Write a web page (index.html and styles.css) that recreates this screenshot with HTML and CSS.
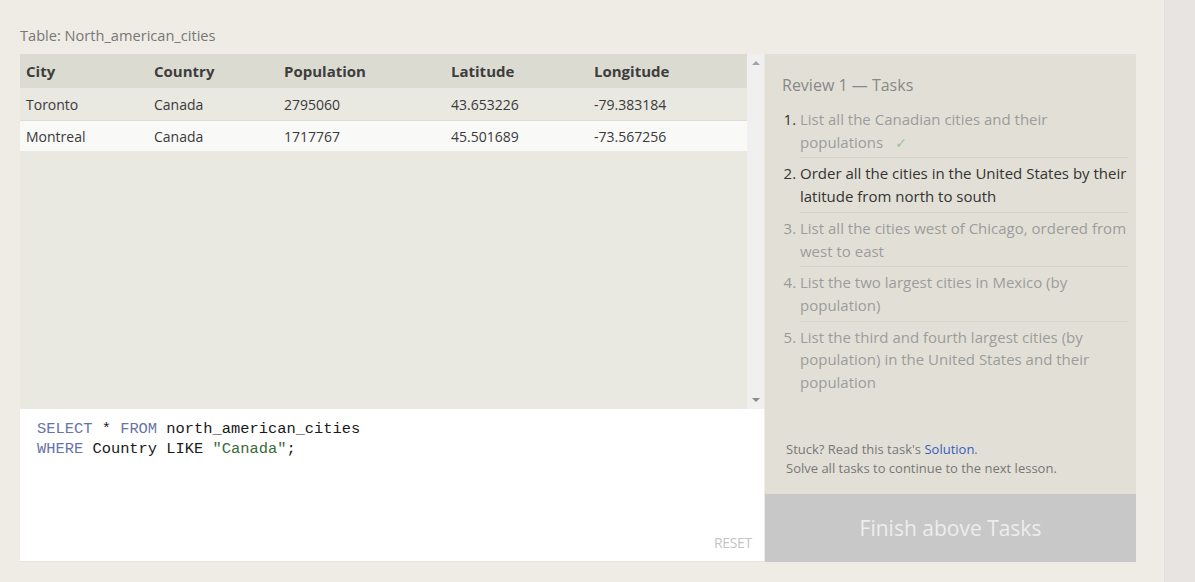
FILE: index.html
```html
<!DOCTYPE html>
<html>
<head>
<meta charset="utf-8">
<link rel="stylesheet" href="styles.css">
</head>
<body>
<div class="page">
  <div class="main">
    <div class="caption">Table: North_american_cities</div>
    <div class="workspace">
      <div class="left">
        <div class="results">
          <div class="table-wrap">
            <table class="data">
              <thead>
                <tr><th class="c1">City</th><th class="c2">Country</th><th class="c3">Population</th><th class="c4">Latitude</th><th class="c5">Longitude</th></tr>
              </thead>
              <tbody>
                <tr class="odd"><td>Toronto</td><td>Canada</td><td>2795060</td><td>43.653226</td><td>-79.383184</td></tr>
                <tr class="even"><td>Montreal</td><td>Canada</td><td>1717767</td><td>45.501689</td><td>-73.567256</td></tr>
              </tbody>
            </table>
          </div>
          <div class="scrollbar">
            <span class="arrow up"></span>
            <span class="arrow down"></span>
          </div>
        </div>
        <div class="editor">
          <pre class="code"><span class="kw">SELECT</span> * <span class="kw">FROM</span> north_american_cities
<span class="kw">WHERE</span> Country LIKE <span class="str">"Canada"</span>;</pre>
          <div class="reset">RESET</div>
        </div>
      </div>
      <div class="right">
        <div class="tasks">
          <div class="tasks-title">Review 1 — Tasks</div>
          <ol class="task-list">
            <li class="done"><span class="line">List all the Canadian cities and their</span> <span class="line">populations</span><span class="check">✓</span></li>
            <li class="active">Order all the cities in the United States by their latitude from north to south</li>
            <li class="todo">List all the cities west of Chicago, ordered from west to east</li>
            <li class="todo">List the two largest cities in Mexico (by population)</li>
            <li class="todo last">List the third and fourth largest cities (by population) in the United States and their population</li>
          </ol>
          <div class="help">
            <div>Stuck? Read this task's <a class="link">Solution</a>.</div>
            <div>Solve all tasks to continue to the next lesson.</div>
          </div>
        </div>
        <div class="finish">Finish above Tasks</div>
      </div>
    </div>
  </div>
  <div class="strip"></div>
</div>
</body>
</html>
```

FILE: styles.css
```css
* { box-sizing: border-box; }
html, body { margin: 0; padding: 0; }
body {
  background: #efece5;
  font-family: "Open Sans", "Noto Sans", sans-serif;
  color: #333;
}
.page {
  display: flex;
  width: 1195px;
  height: 582px;
  overflow: hidden;
}
.main {
  width: 1164px;
  padding: 24px 0 0 20px;
}
.strip {
  flex: 1;
  background: #e7e4e1;
  border-left: 1px solid #e2dfdc;
}
.caption {
  font-size: 14.6px;
  color: #777;
  height: 30px;
  line-height: 22px;
}
.workspace {
  display: flex;
}
.left {
  width: 745px;
  display: flex;
  flex-direction: column;
}
.results {
  display: flex;
  height: 355px;
  background: #e9e8e1;
}
.table-wrap {
  width: 727px;
}
.scrollbar {
  width: 17px;
  background: #f0f0f0;
  position: relative;
}
.arrow {
  position: absolute;
  left: 5px;
  width: 0;
  height: 0;
  border-left: 4px solid transparent;
  border-right: 4px solid transparent;
}
.arrow.up { top: 7px; border-bottom: 4px solid #a3a3a3; }
.arrow.down { bottom: 7px; border-top: 4px solid #8a8a8a; }
.data {
  width: 100%;
  border-collapse: collapse;
  font-size: 14px;
}
.data th {
  background: #dcdbd1;
  text-align: left;
  font-weight: 700;
  font-size: 15px;
  color: #3d3d3d;
  height: 34px;
  padding: 0 6px;
}
.data td {
  height: 32px;
  padding: 1px 6px 0;
  color: #3a3a3a;
}
.c1 { width: 128px; }
.c2 { width: 130px; }
.c3 { width: 167px; }
.c4 { width: 143px; }
.data tr.odd td { background: #e9e8e1; border-bottom: 1px solid #dedcd5; }
.data tr.even td { background: #f9f9f8; height: 31px; }
.editor {
  height: 153px;
  background: #fff;
  position: relative;
  width: 744px;
  border-bottom: 1px solid #e6e4dd;
}
.code {
  margin: 0;
  padding: 10px 0 0 17px;
  font-family: "Liberation Mono", "DejaVu Sans Mono", monospace;
  font-size: 15.4px;
  line-height: 20px;
  color: #1a1a1a;
}
.kw { color: #6774a6; }
.str { color: #3b6b3b; }
.reset {
  position: absolute;
  right: 12px;
  bottom: 9px;
  font-size: 14px;
  color: #c4c4c4;
  letter-spacing: -0.3px;
}
.right {
  width: 371px;
  display: flex;
  flex-direction: column;
}
.tasks {
  height: 440px;
  background: #e2e0d6;
  padding: 20px 8px 0 17px;
  display: flex;
  flex-direction: column;
}
.tasks-title {
  font-size: 16px;
  color: #888;
  height: 34px;
  line-height: 22px;
}
.task-list {
  margin: 0;
  padding: 0 0 0 18px;
  font-size: 15px;
  line-height: 22.7px;
}
.task-list li {
  padding: 0 0 4px 0;
  margin-bottom: 4px;
  border-bottom: 1px solid #d7d5cb;
}
.task-list li.last { border-bottom: none; }
.task-list li::marker { color: #999; }
.task-list li.done { color: #9c9c9c; }
.task-list li.done::marker { color: #333; }
.task-list li.active { color: #333; }
.task-list li.active::marker { color: #333; }
.task-list li.todo { color: #9c9c9c; }
.line { white-space: nowrap; }
.check {
  display: inline-block;
  color: #9fc29a;
  margin-left: 12px;
  font-family: "DejaVu Sans", sans-serif;
  font-size: 14px;
  line-height: 1;
}
.help {
  margin-top: auto;
  padding: 0 0 16px 4px;
  font-size: 13px;
  line-height: 19px;
  color: #777;
}
.link { color: #3a5bbf; }
.finish {
  height: 68px;
  background: #c8c8c8;
  color: #ededed;
  font-size: 21px;
  display: flex;
  align-items: center;
  justify-content: center;
}
```
